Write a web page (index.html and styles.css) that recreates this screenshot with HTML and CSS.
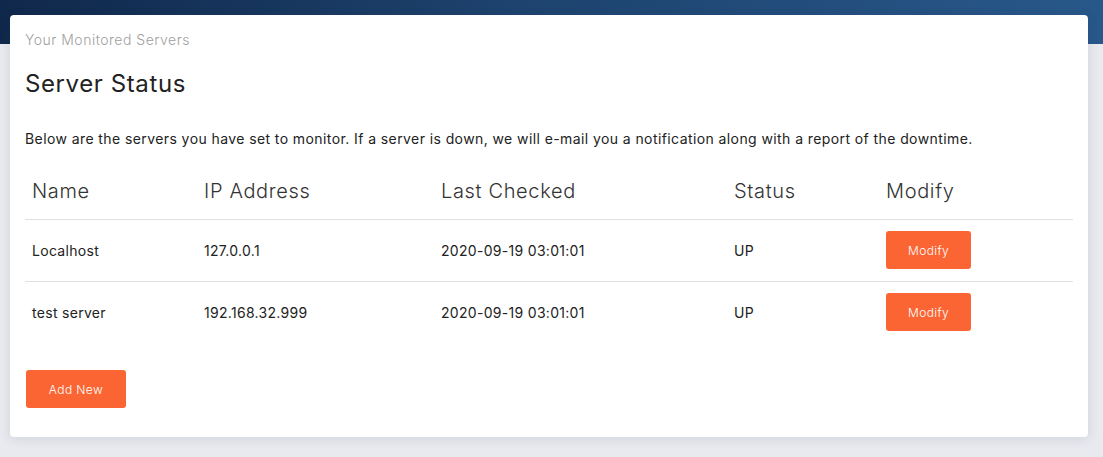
FILE: index.html
```html
<!DOCTYPE html>
<html>
<head>
<meta charset="utf-8">
<link rel="stylesheet" href="styles.css">
</head>
<body>
<div class="topbar"></div>
<main class="page">
  <section class="card">
    <div class="crumb">Your Monitored Servers</div>
    <h1 class="title">Server Status</h1>
    <p class="intro">Below are the servers you have set to monitor. If a server is down, we will e-mail you a notification along with a report of the downtime.</p>
    <table class="servers">
      <thead>
        <tr>
          <th class="c-name">Name</th>
          <th class="c-ip">IP Address</th>
          <th class="c-checked">Last Checked</th>
          <th class="c-status">Status</th>
          <th class="c-mod">Modify</th>
        </tr>
      </thead>
      <tbody>
        <tr>
          <td>Localhost</td>
          <td>127.0.0.1</td>
          <td>2020-09-19 03:01:01</td>
          <td>UP</td>
          <td><button class="btn btn-mod">Modify</button></td>
        </tr>
        <tr>
          <td>test server</td>
          <td>192.168.32.999</td>
          <td>2020-09-19 03:01:01</td>
          <td>UP</td>
          <td><button class="btn btn-mod">Modify</button></td>
        </tr>
      </tbody>
    </table>
    <button class="btn btn-add">Add New</button>
  </section>
</main>
</body>
</html>
```
FILE: styles.css
```css
* { box-sizing: border-box; }
html, body { margin: 0; padding: 0; }
body {
  background: #e9eaef;
  font-family: Inter, "Noto Sans", sans-serif;
  color: #212529;
  height: 457px;
  overflow: hidden;
  position: relative;
}
.topbar {
  height: 44px;
  background: linear-gradient(90deg, #10284b 0%, #1d426d 45%, #28588a 100%);
}
.page {
  margin-top: -29px;
  padding: 0 15px 0 10px;
}
.card {
  background: #fff;
  border-radius: 4px;
  box-shadow: 0 2px 12px rgba(40, 50, 80, 0.12);
  height: 422px;
  padding: 17px 15px 0 15px;
}
.crumb {
  font-size: 14px;
  color: #a0a0a0;
  font-weight: 300;
  line-height: 16px;
  letter-spacing: 0.5px;
}
.title {
  font-size: 24px;
  font-weight: 400;
  margin: 20px 0 0 0;
  line-height: 32px;
  color: #222;
  letter-spacing: 0.6px;
}
.intro {
  font-size: 14px;
  margin: 29px 0 0 0;
  line-height: 20px;
  color: #222;
  letter-spacing: 0.41px;
}
.servers {
  width: 1048px;
  border-collapse: collapse;
  margin-top: 14px;
}
.servers th {
  text-align: left;
  font-weight: 300;
  font-size: 20px;
  color: #333;
  height: 56px;
  padding: 0 7px;
  border-bottom: 1px solid #e0e0e0;
  letter-spacing: 0.65px;
}
.c-name { width: 172px; }
.c-ip { width: 237px; }
.c-checked { width: 293px; }
.c-status { width: 152px; }
.servers td {
  font-size: 14px;
  color: #222;
  height: 62px;
  padding: 0 7px;
  border-bottom: 1px solid #e0e0e0;
  letter-spacing: 0.3px;
}
.servers tbody tr:last-child td { border-bottom: none; }
.btn {
  background: #fb6533;
  color: #fff;
  border: none;
  border-radius: 3px;
  font-family: inherit;
  font-size: 12px;
  font-weight: 300;
  letter-spacing: 0.4px;
  height: 38px;
  padding: 0;
}
.btn-mod { width: 85px; }
.btn-add { width: 100px; margin: 27px 0 0 1px; display: block; }
```
